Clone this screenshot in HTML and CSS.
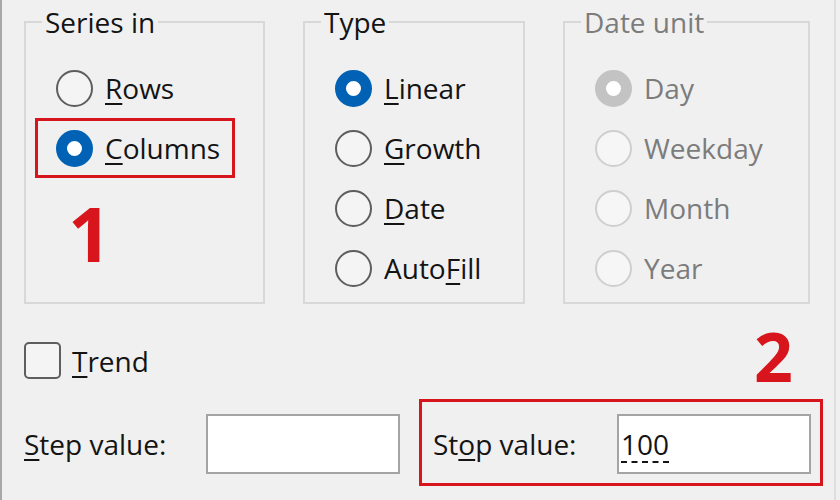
FILE: index.html
```html
<!DOCTYPE html>
<html lang="en">
<head>
  <meta charset="UTF-8" />
  <meta name="viewport" content="width=device-width, initial-scale=1.0"/>
  <title>Series</title>
  <link rel="stylesheet" href="styles.css">
</head>
<body>
  <div class="dialog">
    <div class="groups">
      <fieldset class="group">
        <legend>Series in</legend>
        <label class="option"><input class="radio" type="radio" name="series"><span><u>R</u>ows</span></label>
        <label class="option marked"><input class="radio" type="radio" name="series" checked><span><u>C</u>olumns</span></label>
        <div class="step-no step-one">1</div>
      </fieldset>

      <fieldset class="group group-type">
        <legend>Type</legend>
        <label class="option"><input class="radio" type="radio" name="type" checked><span><u>L</u>inear</span></label>
        <label class="option"><input class="radio" type="radio" name="type"><span><u>G</u>rowth</span></label>
        <label class="option"><input class="radio" type="radio" name="type"><span><u>D</u>ate</span></label>
        <label class="option"><input class="radio" type="radio" name="type"><span>Auto<u>F</u>ill</span></label>
      </fieldset>

      <fieldset class="group group-date" disabled>
        <legend>Date unit</legend>
        <label class="option"><input class="radio" type="radio" name="unit" checked><span>Day</span></label>
        <label class="option"><input class="radio" type="radio" name="unit"><span>Weekday</span></label>
        <label class="option"><input class="radio" type="radio" name="unit"><span>Month</span></label>
        <label class="option"><input class="radio" type="radio" name="unit"><span>Year</span></label>
      </fieldset>
    </div>

    <div class="trend-row">
      <label class="check"><input class="checkbox" type="checkbox"><span><u>T</u>rend</span></label>
      <div class="step-no step-two">2</div>
    </div>

    <div class="value-row">
      <div class="field field-plain">
        <label class="field-label" for="step"><u>S</u>tep value:</label>
        <input class="textbox" id="step" type="text">
      </div>
      <div class="field marked">
        <label class="field-label" for="stop">St<u>o</u>p value:</label>
        <input class="textbox textbox-ime" id="stop" type="text" value="100">
      </div>
    </div>
  </div>
</body>
</html>
```

FILE: styles.css
```css
:root {
  --bg: #f0f0f0;
  --text: #141414;
  --muted: #7c7c7c;
  --accent: #0061b5;
  --mark: #d8141c;
  --group-line: #d8d8d8;
}

body {
  margin: 0;
  background-color: var(--bg);
  color: var(--text);
  font-family: 'Open Sans', 'Noto Sans', sans-serif;
  font-size: 28px;
}

u {
  text-decoration-thickness: 2px;
  text-underline-offset: 4px;
}

.dialog {
  box-sizing: border-box;
  width: 836px;
  height: 500px;
  padding: 7px 11px 0 22px;
  border-left: 2px solid #a8a8a8;
  border-right: 2px solid #dedede;
}

.groups {
  display: flex;
  gap: 38px;
}

.group {
  box-sizing: border-box;
  height: 297px;
  margin: 0;
  padding: 21px 0 0 30px;
  border: 2px solid var(--group-line);
  min-inline-size: 0;
  width: 241px;
}

.group-type {
  width: 222px;
}

.group-date {
  width: 247px;
  color: var(--muted);
}

legend {
  margin-left: -14px;
  padding: 0 3px;
  line-height: 30px;
}

.option {
  display: flex;
  align-items: center;
  gap: 12px;
  height: 60px;
}

.option.marked {
  box-sizing: border-box;
  width: fit-content;
  margin-left: -21px;
  padding: 0 12px 0 18px;
  border: 3px solid var(--mark);
}

.radio {
  appearance: none;
  box-sizing: border-box;
  flex: none;
  width: 37px;
  height: 37px;
  margin: 0;
  border-radius: 50%;
  border: 2px solid #5e5e5e;
  background: #f4f4f4;
}

.radio:checked {
  border: 11px solid var(--accent);
  background: #fff;
}

.radio:disabled {
  border-color: #cfcfcf;
  background: #f6f6f6;
}

.radio:disabled:checked {
  border: 11px solid #c3c3c3;
  background: #fff;
}

.step-no {
  font-family: 'Open Sans', 'Liberation Sans', sans-serif;
  font-weight: bold;
  color: var(--mark);
  line-height: 1;
}

.step-one {
  margin: 17px 0 0 12px;
  font-size: 76px;
}

.step-two {
  margin: 0 30px 9px 0;
  font-size: 68px;
}

.trend-row {
  display: flex;
  justify-content: space-between;
  align-items: center;
  margin-top: 18px;
}

.check {
  display: flex;
  align-items: center;
  gap: 11px;
}

.checkbox {
  appearance: none;
  box-sizing: border-box;
  width: 37px;
  height: 37px;
  margin: 0;
  border: 2px solid #5e5e5e;
  border-radius: 5px;
  background: #f4f4f4;
}

.value-row {
  display: flex;
  align-items: center;
  justify-content: space-between;
}

.field {
  display: flex;
  align-items: center;
}

.field-plain {
  margin-top: 3px;
}

.field.marked {
  padding: 12px 9px 9px 11px;
  border: 3px solid var(--mark);
}

.field-label {
  width: 184px;
}

.field-plain .field-label {
  width: 182px;
}

.textbox {
  box-sizing: border-box;
  width: 194px;
  height: 60px;
  margin: 0;
  padding: 0 2px;
  border: 2px solid #a4a4a4;
  background: #fff;
  font: inherit;
  color: var(--text);
  outline: none;
}

.textbox-ime {
  text-decoration: underline dashed 2px;
  text-underline-offset: 6px;
}
```
